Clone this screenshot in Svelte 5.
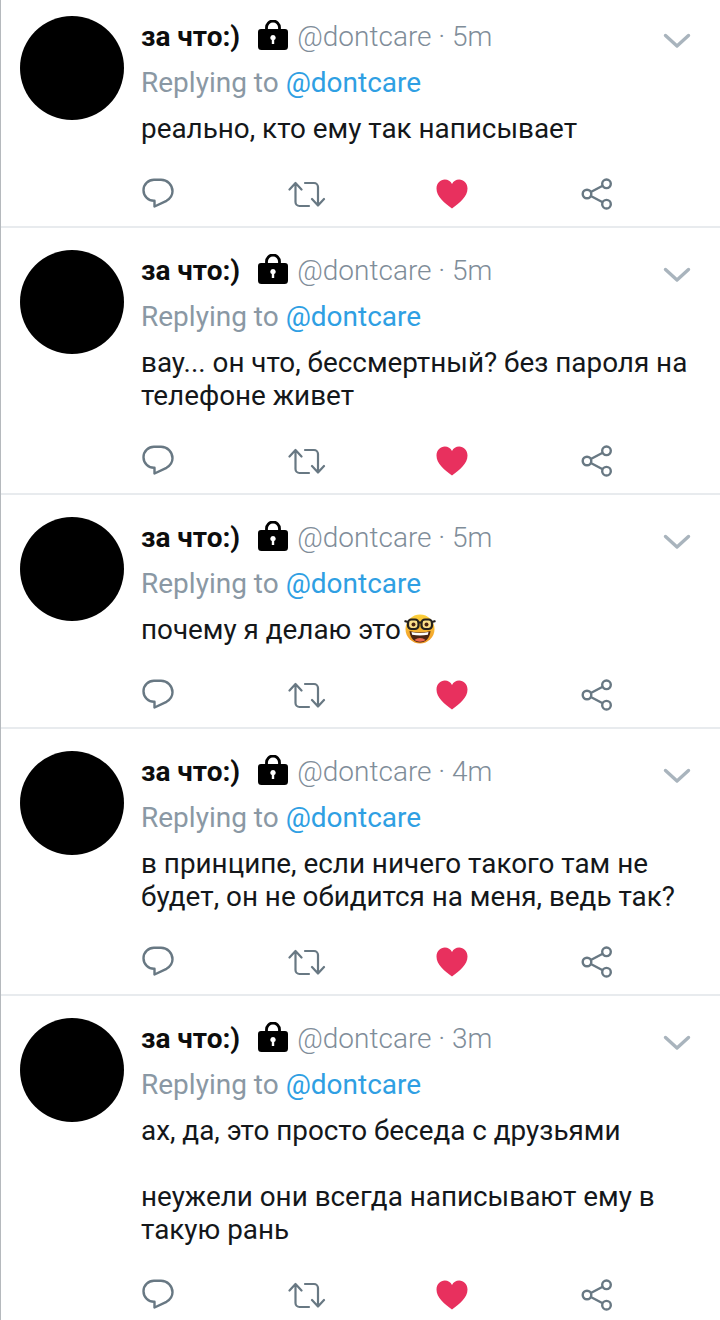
<script lang="ts">
  const tweets = [
    { age: '5m', lines: ['реально, кто ему так написывает'] },
    { age: '5m', lines: ['вау... он что, бессмертный? без пароля на', 'телефоне живет'] },
    { age: '5m', lines: ['почему я делаю это'], nerd: true },
    { age: '4m', lines: ['в принципе, если ничего такого там не', 'будет, он не обидится на меня, ведь так?'] },
    { age: '3m', lines: ['ах, да, это просто беседа с друзьями', '', 'неужели они всегда написывают ему в', 'такую рань'] },
  ];
</script>

<main class="thread">
  {#each tweets as tweet}
    <article class="tweet">
      <div class="avatar"></div>
      <div class="body">
        <header class="head">
          <span class="name">за что:)</span>
          <svg class="lock" viewBox="0 0 30 30" aria-hidden="true">
            <path d="M8.500 11V7.500a6.500 6.500 0 0 1 13 0V11" fill="none" stroke="#000" stroke-width="2.800" />
            <path fill-rule="evenodd" d="M3 9h24a3 3 0 0 1 3 3v14.500a3.500 3.500 0 0 1-3.500 3.500h-23A3.500 3.500 0 0 1 0 26.500V12a3 3 0 0 1 3-3ZM15 15a2.700 2.700 0 0 0-1.200 5.100V24h2.400v-3.900A2.700 2.700 0 0 0 15 15Z" fill="#000" />
          </svg>
          <span class="meta">@dontcare · {tweet.age}</span>
          <svg class="chevron" viewBox="0 0 28 16" aria-hidden="true">
            <path d="M2.500 2.500 14 13 25.500 2.500" fill="none" stroke="#a9b4bd" stroke-width="3.400" stroke-linecap="round" stroke-linejoin="round" />
          </svg>
        </header>
        <div class="reply">Replying to <span class="link">@dontcare</span></div>
        <div class="text">
          {#each tweet.lines as line}
            <div class="line">{line}{#if tweet.nerd}<svg class="nerd" viewBox="0 0 32 30" aria-hidden="true">
                  <defs>
                    <linearGradient id="nerd-face" x1="0" y1="0" x2="0" y2="1">
                      <stop offset="0" stop-color="#fbd03c" />
                      <stop offset="1" stop-color="#f29a26" />
                    </linearGradient>
                  </defs>
                  <circle cx="16" cy="15" r="14.500" fill="url(#nerd-face)" />
                  <path d="M5.500 17c7 2 14 2 21 0-.5 7-5 11.500-10.500 11.500S6 24 5.500 17Z" fill="#4a2412" />
                  <path d="M7.500 18c5.500 1.300 11.500 1.300 17 0l-.6 2.800c-5.300 1-10.500 1-15.800 0Z" fill="#fff" />
                  <path d="M10.500 26c3-2.800 8-2.800 11 0-3 2.200-8 2.200-11 0Z" fill="#ee6a52" />
                  <rect x="4" y="5.500" width="10.500" height="9.500" rx="3.500" fill="#fbe08a" stroke="#26221e" stroke-width="2.200" />
                  <rect x="17.500" y="5.500" width="10.500" height="9.500" rx="3.500" fill="#fbe08a" stroke="#26221e" stroke-width="2.200" />
                  <path d="M14 8.500h4M4 8 .5 7M28 8l3.500-1" stroke="#26221e" stroke-width="2.200" />
                  <circle cx="9.500" cy="10.500" r="2" fill="#4a2412" />
                  <circle cx="22.500" cy="10.500" r="2" fill="#4a2412" />
                </svg>{/if}</div>
          {/each}
        </div>
        <footer class="actions">
          <svg class="icon" viewBox="0 0 32 32" aria-hidden="true">
            <path d="M12.500 1.800h6.500a11.500 11.500 0 0 1 11.500 11.500c0 4.500-2.700 7.500-6 9.500L12.500 28.500v-5.700A10.500 10.500 0 0 1 1.500 12.300 10.500 10.500 0 0 1 12.500 1.800Z" fill="none" stroke="#687883" stroke-width="2.400" stroke-linejoin="round" />
          </svg>
          <svg class="icon retweet" viewBox="0 0 38 32" aria-hidden="true">
            <path d="M7.500 5.500V24a4 4 0 0 0 4 4H21M1.500 11.500l6-6.500 6 6.500M30 27V9a4 4 0 0 0-4-4h-9M24 21l6 6.500 6-6.500" fill="none" stroke="#687883" stroke-width="2.200" stroke-linecap="round" stroke-linejoin="round" />
          </svg>
          <svg class="icon heart" viewBox="0 0 32 32" aria-hidden="true">
            <path d="M16 30.500C8 24.500.5 18.500.5 10.500.5 5 4.500 1.500 8.800 1.500c3.200 0 5.800 1.600 7.200 4.500 1.400-2.900 4-4.500 7.200-4.500 4.300 0 8.300 3.500 8.300 9 0 8-7.500 14-15.500 20Z" fill="#e8305e" />
          </svg>
          <svg class="icon share" viewBox="0 0 32 32" aria-hidden="true">
            <g fill="none" stroke="#687883" stroke-width="2.400">
              <circle cx="6" cy="16" r="4.300" />
              <circle cx="25.500" cy="5.800" r="4.300" />
              <circle cx="25.500" cy="26.200" r="4.300" />
              <path d="M9.800 14 21.700 7.800M9.800 18 21.700 24.200" />
            </g>
          </svg>
        </footer>
      </div>
    </article>
  {/each}
</main>

<style>
  :global(body) {
    margin: 0;
    background: #fff;
  }

  .thread {
    height: 1320px;
    overflow: hidden;
    box-sizing: border-box;
    border-left: 1px solid #b5b9bd;
    font-family: Roboto, 'Noto Sans', sans-serif;
  }

  .tweet {
    display: flex;
    gap: 17px;
    padding: 22px 0 0 19px;
    border-bottom: 2px solid #e8ebee;
  }

  .tweet:first-child {
    padding-top: 16px;
  }

  .avatar {
    flex: none;
    width: 104px;
    height: 104px;
    border-radius: 50%;
    background: #000;
  }

  .body {
    flex: 1;
    min-width: 0;
    padding-right: 28px;
  }

  .head {
    display: flex;
    align-items: center;
    height: 40px;
    font-size: 28px;
  }

  .name {
    font-weight: 700;
    color: #0d0d0d;
  }

  .lock {
    width: 30px;
    height: 30px;
    margin: -3px 9px 0 18px;
  }

  .meta {
    font-weight: 300;
    color: #7f8d99;
  }

  .chevron {
    width: 28px;
    height: 16px;
    margin-left: auto;
    margin-top: 10px;
    margin-right: 1px;
  }

  .reply {
    font-size: 28px;
    line-height: 52px;
    padding-top: 1px;
    color: #8a98a4;
  }

  .link {
    color: #2f9fe3;
  }

  .text {
    font-size: 27.850px;
    line-height: 33px;
    color: #14171a;
    margin-top: 3px;
  }

  .line {
    min-height: 33px;
    white-space: nowrap;
    display: flex;
    align-items: center;
  }

  .nerd {
    width: 32px;
    height: 30px;
    flex: none;
    margin: -2px 0 0 3px;
  }

  .actions {
    display: flex;
    margin: 33px 0 16px 1px;
  }

  .icon {
    flex: none;
    height: 32px;
    width: 32px;
  }

  .retweet {
    width: 38px;
    margin-left: 114px;
  }

  .heart {
    margin-left: 110px;
  }

  .share {
    margin-left: 113px;
  }
</style>
